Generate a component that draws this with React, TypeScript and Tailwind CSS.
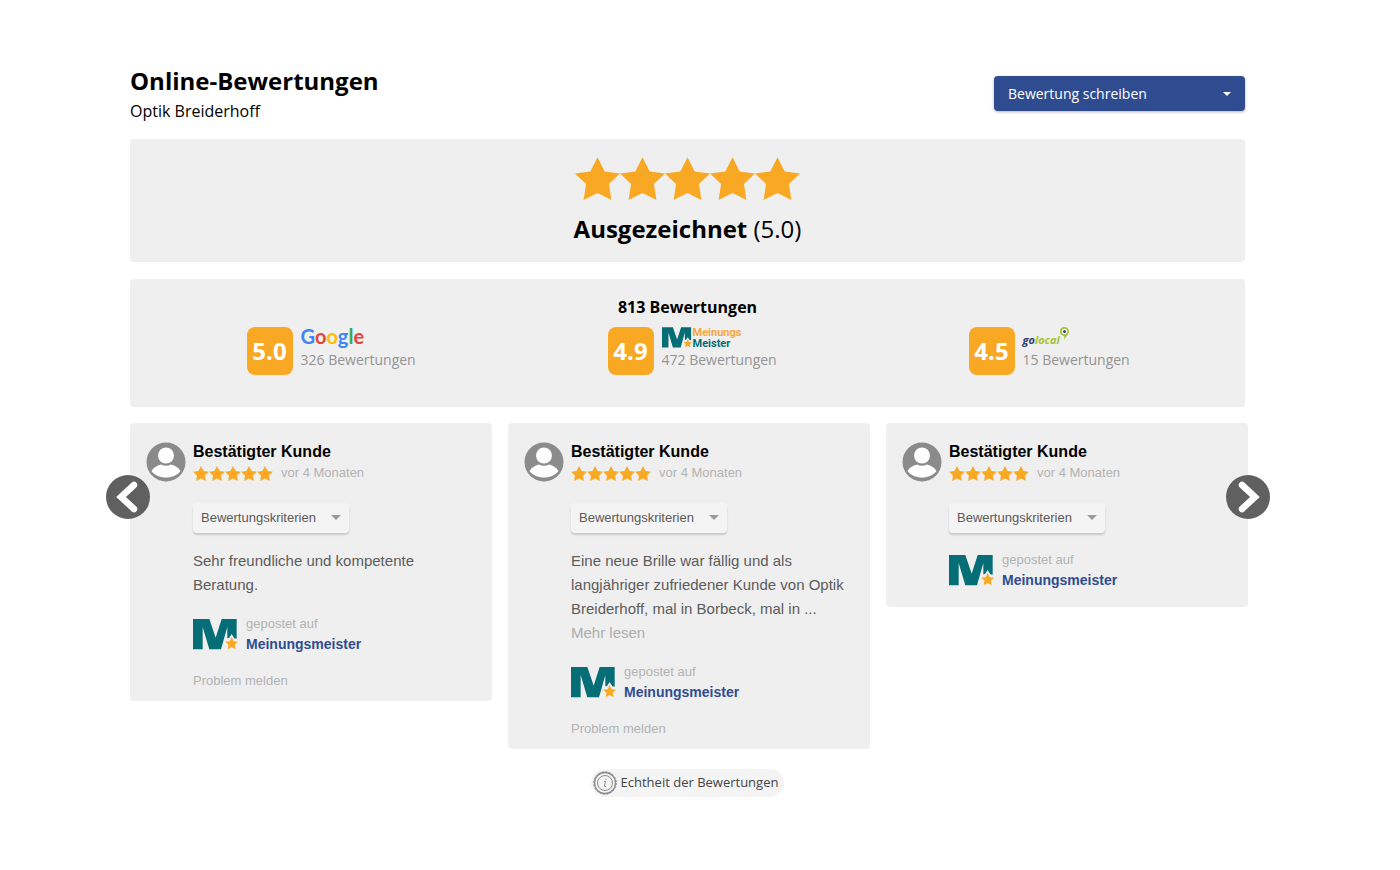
import React from 'react';

interface Review {
  id: number;
  name: string;
  date: string;
  text?: string;
  truncated?: boolean;
  reportable?: boolean;
}

const reviews: Review[] = [
  {
    id: 1,
    name: 'Bestätigter Kunde',
    date: 'vor 4 Monaten',
    text: 'Sehr freundliche und kompetente Beratung.',
    reportable: true,
  },
  {
    id: 2,
    name: 'Bestätigter Kunde',
    date: 'vor 4 Monaten',
    text: 'Eine neue Brille war fällig und als langjähriger zufriedener Kunde von Optik Breiderhoff, mal in Borbeck, mal in ...',
    truncated: true,
    reportable: true,
  },
  { id: 3, name: 'Bestätigter Kunde', date: 'vor 4 Monaten' },
];

function Star({ className }: { className: string }) {
  return (
    <svg viewBox="2 2 20 19" className={className} fill="currentColor" aria-hidden="true">
      <path d="M12 17.900 18.180 21l-1.100-7.030L22 9.240l-6.800-.9L12 2 8.800 8.340 2 9.240l4.920 4.730L5.820 21z" />
    </svg>
  );
}

function Stars({ starClassName }: { starClassName: string }) {
  return (
    <div className="flex text-[#f9a824]" role="img" aria-label="5 von 5 Sternen">
      {[1, 2, 3, 4, 5].map((n) => (
        <Star key={n} className={starClassName} />
      ))}
    </div>
  );
}

function MeisterMark({ className }: { className: string }) {
  return (
    <svg viewBox="0 0 135 93" className={className} aria-hidden="true">
      <path
        fill="#046d75"
        d="M0 0H49L68 56 86 0H131V59L124 58 116 45 108 57 103 58V24L84 91H49L29 24V91H0z"
      />
      <path
        fill="#f9a824"
        d="M116 54l6 12.500 13 1.500-9.500 9 2.500 14-12-7-12 7 2.500-14-9.500-9 13-1.500z"
      />
    </svg>
  );
}

function GoogleLogo() {
  return (
    <span className="block font-['Lato'] text-xl leading-[18px] font-bold">
      <span className="text-[#4285f4]">G</span>
      <span className="text-[#ea4335]">o</span>
      <span className="text-[#fbbc05]">o</span>
      <span className="text-[#4285f4]">g</span>
      <span className="text-[#34a853]">l</span>
      <span className="text-[#ea4335]">e</span>
    </span>
  );
}

function MeinungsMeisterLogo() {
  return (
    <span className="flex items-start gap-px font-['Roboto'] text-[11px] leading-[11px] font-bold">
      <MeisterMark className="h-[21px] w-[30px]" />
      <span className="flex flex-col">
        <span className="text-[#f5a742]">Meinungs</span>
        <span className="text-[#046d75]">Meister</span>
      </span>
    </span>
  );
}

function GolocalLogo() {
  return (
    <span className="flex items-start">
      <span className="pt-1 text-[11px] leading-[18px] font-bold italic">
        <span className="text-[#2b3f72]">go</span>
        <span className="text-[#a5c330]">local</span>
      </span>
      <svg viewBox="0 0 18 26" className="h-[13px] w-[9px]" aria-hidden="true">
        <path fill="#a5c330" d="M9 0a9 9 0 0 1 9 9c0 5-6 9-9 17 0-4 0-6-1-8A9 9 0 0 1 9 0z" />
        <circle cx="9" cy="9" r="5.500" fill="#fff" />
        <circle cx="9" cy="9" r="3" fill="#2b3f72" />
      </svg>
    </span>
  );
}

const portals = [
  { name: 'Google', score: '5.0', count: '326 Bewertungen', logo: <GoogleLogo /> },
  { name: 'MeinungsMeister', score: '4.9', count: '472 Bewertungen', logo: <MeinungsMeisterLogo /> },
  { name: 'golocal', score: '4.5', count: '15 Bewertungen', logo: <GolocalLogo /> },
];

function Caret({ className }: { className: string }) {
  return (
    <svg viewBox="0 0 10 5" className={className} fill="currentColor" aria-hidden="true">
      <path d="M0 0h10L5 5z" />
    </svg>
  );
}

function Avatar() {
  return (
    <svg viewBox="0 0 40 40" className="size-10 shrink-0" aria-hidden="true">
      <circle cx="20" cy="20" r="19.500" fill="#8b8b8b" />
      <circle cx="20" cy="13.500" r="8" fill="#fff" />
      <path fill="#fff" d="M5.500 29C8 25 12 23 15 22.500c3 1.600 7 1.600 10 0 3 .5 7 2.500 9.500 6.500-3 4-8 6.500-14.500 6.500S8.500 33 5.500 29z" />
    </svg>
  );
}

function ReviewCard({ review }: { review: Review }) {
  return (
    <article className="flex gap-[7px] rounded bg-[#efefef] px-4 pt-[19px] font-['Liberation_Sans',Arial,sans-serif]">
      <Avatar />
      <div className="min-w-0 flex-1">
        <h3 className="text-base leading-[19px] font-bold text-black">{review.name}</h3>
        <div className="mt-[3px] flex items-center gap-2">
          <Stars starClassName="h-[15px] w-4" />
          <span className="text-[13px] leading-[18px] text-[#b3b3b3]">{review.date}</span>
        </div>

        <div className="relative mt-[21px] w-[156px]">
          <select
            aria-label="Bewertungskriterien"
            className="h-[30px] w-full appearance-none rounded-sm bg-[#f4f4f4] pl-2 text-[13px] text-[#5a5a5a] shadow-[0_2px_2px_rgba(0,0,0,0.16)]"
          >
            <option>Bewertungskriterien</option>
          </select>
          <Caret className="pointer-events-none absolute top-3 right-2 h-[5px] w-2.5 text-[#9a9a9a]" />
        </div>

        {review.text && (
          <p className="mt-4 text-[15px] leading-6 text-[#5c5c5c]">{review.text}</p>
        )}
        {review.truncated && (
          <button type="button" className="block text-[15px] leading-6 text-[#adadad]">
            Mehr lesen
          </button>
        )}

        <div className={`mt-4 flex items-center gap-2 ${review.reportable ? '' : 'mb-4'}`}>
          <MeisterMark className="h-[31px] w-[45px]" />
          <div className="flex flex-col leading-[21px]">
            <span className="text-[13px] text-[#b3b3b3]">gepostet auf</span>
            <a href="#meinungsmeister" className="text-sm leading-[21px] font-bold text-[#304c90]">
              Meinungsmeister
            </a>
          </div>
        </div>

        {review.reportable && (
          <button type="button" className="mt-4 mb-2.5 block text-[13px] leading-5 text-[#b3b3b3]">
            Problem melden
          </button>
        )}
      </div>
    </article>
  );
}

function ArrowButton({ label, path, className }: { label: string; path: string; className: string }) {
  return (
    <button
      type="button"
      aria-label={label}
      className={`absolute top-[52px] flex size-11 items-center justify-center rounded-full bg-[#606060] ${className}`}
    >
      <svg viewBox="0 0 44 44" className="size-11" fill="none" stroke="#fff" strokeWidth="6.500" strokeLinecap="round">
        <path d={path} />
      </svg>
    </button>
  );
}

export default function App() {
  return (
    <main className="bg-white pt-16 pr-[155px] pb-16 pl-[130px] font-['Open_Sans',sans-serif] text-black">
      <header className="flex items-start justify-between">
        <div>
          <h1 className="text-2xl leading-[34px] font-bold">Online-Bewertungen</h1>
          <p className="text-base leading-[26px]">Optik Breiderhoff</p>
        </div>
        <div className="relative mt-3 w-[251px]">
          <select
            aria-label="Bewertung schreiben"
            className="h-[35px] w-full appearance-none rounded-sm bg-[#304c90] pl-3.5 text-sm text-white shadow-[0_1px_3px_rgba(0,0,0,0.3)]"
          >
            <option>Bewertung schreiben</option>
          </select>
          <Caret className="pointer-events-none absolute top-4 right-3.5 h-1 w-2 text-white" />
        </div>
      </header>

      {/* Overall rating */}
      <section className="mt-[15px] flex flex-col items-center rounded bg-[#efefef] pt-[18px] pb-4">
        <Stars starClassName="h-[43px] w-[45px]" />
        <p className="mt-3 text-2xl leading-[34px]">
          <strong className="font-bold">Ausgezeichnet</strong> (5.0)
        </p>
      </section>

      {/* Rating per portal */}
      <section className="mt-[17px] rounded bg-[#efefef] px-4 pt-4 pb-8">
        <h2 className="text-center text-base leading-6 font-bold">813 Bewertungen</h2>
        <ul className="mt-2 grid grid-cols-3">
          {portals.map((portal) => (
            <li key={portal.name} className="mx-auto flex w-40 gap-2 whitespace-nowrap">
              <div className="flex h-12 w-[46px] shrink-0 items-center justify-center rounded-lg bg-[#f9a824] text-2xl font-bold text-white">
                {portal.score}
              </div>
              <div>
                <div className="h-[22px]">{portal.logo}</div>
                <p className="text-sm leading-[22px] text-[#949494]">{portal.count}</p>
              </div>
            </li>
          ))}
        </ul>
      </section>

      {/* Review carousel */}
      <section className="relative mt-4 -mr-[3px]">
        <div className="grid grid-cols-3 items-start gap-4">
          {reviews.map((review) => (
            <ReviewCard key={review.id} review={review} />
          ))}
        </div>
        <ArrowButton label="Zurück" path="M28 10 15 22l13 12" className="-left-6" />
        <ArrowButton label="Weiter" path="M16 10l13 12-13 12" className="-right-[22px]" />
      </section>

      <footer className="mt-5 flex justify-center">
        <button type="button" className="flex items-center gap-1 rounded-full bg-[#f4f4f4] py-0.5 pr-1.5 pl-0.5 text-[13px] text-[#444]">
          <svg viewBox="0 0 24 24" className="size-6" fill="none" stroke="#8c8c8c" aria-hidden="true">
            <circle cx="12" cy="12" r="10.500" strokeWidth="1.300" />
            <circle cx="12" cy="12" r="11.300" strokeWidth="1" strokeDasharray="2 1.550" />
            <circle cx="12" cy="12" r="7.500" />
            <path d="M11 10.500h1.500l-1.200 5h1.500M12.800 7.500v1" />
          </svg>
          Echtheit der Bewertungen
        </button>
      </footer>
    </main>
  );
}
